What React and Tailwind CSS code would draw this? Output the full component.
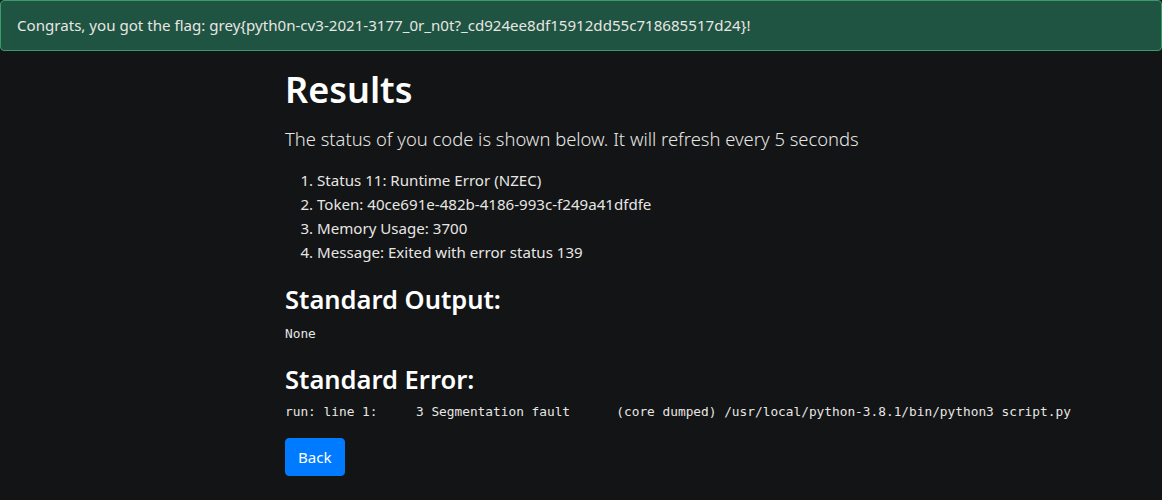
export default function App() {
  const sans = { fontFamily: '"Noto Sans", "Open Sans", sans-serif' };
  const mono = { fontFamily: '"DejaVu Sans Mono", "Liberation Mono", monospace' };
  return (
    <div className="min-h-[500px] bg-[#121416] text-[#e8e6e3]" style={sans}>
      <div className="rounded-[4px] border border-[#3b9a6c] bg-[#1f5442] pt-3 pb-[13px] pl-4 pr-5 text-[15.1px] leading-6 text-[#e8e6e3]">
        Congrats, you got the flag: grey{"{"}pyth0n-cv3-2021-3177_0r_n0t?_cd924ee8df15912dd55c718685517d24{"}"}!
      </div>
      <div className="pl-[285px] pt-[15px]">
        <h1 className="mb-[10px] text-[36px] font-semibold leading-[48px] text-white">Results</h1>
        <p className="mb-[14px] text-[18.4px] font-light leading-[30px]">
          The status of you code is shown below. It will refresh every 5 seconds
        </p>
        <ol className="mb-[18px] list-decimal pl-8 text-[15.1px] leading-6">
          <li>Status 11: Runtime Error (NZEC)</li>
          <li>Token: 40ce691e-482b-4186-993c-f249a41dfdfe</li>
          <li>Memory Usage: 3700</li>
          <li>Message: Exited with error status 139</li>
        </ol>
        <h3 className="mb-[7px] text-[25.5px] font-semibold leading-[34px] text-white">Standard Output:</h3>
        <pre className="mb-[18px] text-[12.8px] leading-[21px] text-[#e8e6e3]" style={mono}>
          None
        </pre>
        <h3 className="mb-[5px] text-[25.5px] font-semibold leading-[34px] text-white">Standard Error:</h3>
        <pre className="mb-[16px] text-[12.8px] leading-[21px] text-[#e8e6e3]" style={mono}>
          {"run: line 1:     3 Segmentation fault      (core dumped) /usr/local/python-3.8.1/bin/python3 script.py"}
        </pre>
        <button className="rounded-[4px] border border-[#007bff] bg-[#007bff] px-3 py-1.5 text-[15.1px] leading-6 text-white">
          Back
        </button>
      </div>
    </div>
  );
}
